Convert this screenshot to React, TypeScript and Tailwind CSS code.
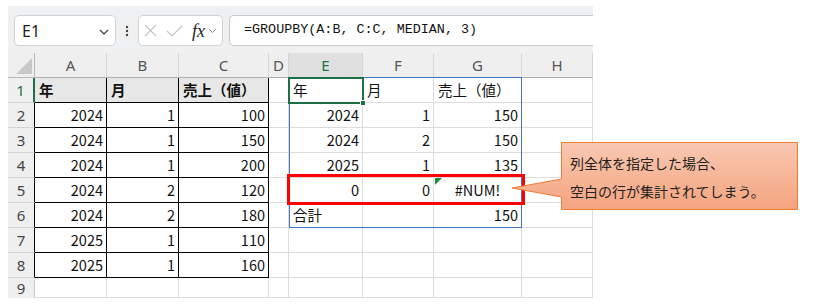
import React from "react";

type Align = "l" | "r" | "c";

interface CellData {
  text: string;
  align?: Align;
  bold?: boolean;
}

const COLS = ["A", "B", "C", "D", "E", "F", "G", "H"];

const n = (text: string): CellData => ({ text, align: "r" });
const t = (text: string, bold = false): CellData => ({ text, align: "l", bold });
const e: CellData = { text: "" };

// A..H for rows 1-9
const rows: CellData[][] = [
  [t("年", true), t("月", true), t("売上（値）", true), e, t("年"), t("月"), t("売上（値）"), e],
  [n("2024"), n("1"), n("100"), e, n("2024"), n("1"), n("150"), e],
  [n("2024"), n("1"), n("150"), e, n("2024"), n("2"), n("150"), e],
  [n("2024"), n("1"), n("200"), e, n("2025"), n("1"), n("135"), e],
  [n("2024"), n("2"), n("120"), e, n("0"), n("0"), { text: "#NUM!", align: "c" }, e],
  [n("2024"), n("2"), n("180"), e, t("合計"), e, n("150"), e],
  [n("2025"), n("1"), n("110"), e, e, e, e, e],
  [n("2025"), n("1"), n("160"), e, e, e, e, e],
  [e, e, e, e, e, e, e, e],
];

const alignClass: Record<Align, string> = {
  l: "justify-start pl-[4px]",
  r: "justify-end pr-[3px]",
  c: "justify-center",
};

const cellBorder = (r: number, c: number) => {
  if (r <= 8 && c <= 2) return "border-r border-b border-black";
  return "border-r border-b border-[#dcdcdc]";
};

const rowHeadClass = (r: number) => {
  if (r === 1) return "border-b border-b-[#d4d4d4] border-r-2 border-r-[#1e7145] text-[#1e7145]";
  if (r <= 8) return "border-b border-b-[#d4d4d4] border-r border-r-black text-[#444]";
  return "border-r border-r-[#c8c8c8] text-[#444]";
};

const FormulaBar = () => (
  <div className="h-[47px] bg-[#eff0f2] pt-[9px] flex items-start">
    {/* Name box */}
    <div className="ml-[6px] w-[102px] h-[31px] bg-white border border-[#d2d2d2] rounded-[5px] flex items-center justify-between pl-[7px] pr-[6px]">
      <span className="text-[16px] text-[#222] font-['Noto_Sans',sans-serif]">E1</span>
      <svg width="10" height="6" viewBox="0 0 10 6" className="mt-[3px]">
        <path d="M1 1l4 4 4-4" fill="none" stroke="#444" strokeWidth="1.3" />
      </svg>
    </div>
    {/* dots */}
    <div className="w-[22px] h-[31px] flex items-center justify-center">
      <svg width="4" height="12" viewBox="0 0 4 12">
        <circle cx="2" cy="2" r="1.2" fill="#444" />
        <circle cx="2" cy="6" r="1.2" fill="#444" />
        <circle cx="2" cy="10" r="1.2" fill="#444" />
      </svg>
    </div>
    {/* fx box */}
    <div className="w-[85px] h-[31px] bg-white border border-[#d2d2d2] rounded-[5px] flex items-center pl-[5px] gap-[9px]">
      <svg width="13" height="13" viewBox="0 0 13 13">
        <path d="M1 1l11 11M12 1L1 12" stroke="#c4c4c4" strokeWidth="1.1" fill="none" />
      </svg>
      <svg width="17" height="12" viewBox="0 0 17 12">
        <path d="M1 6l5 5L16 1" stroke="#c4c4c4" strokeWidth="1.1" fill="none" />
      </svg>
      <div className="flex items-center gap-[3px]">
        <span className="italic text-[18px] text-[#222] font-['Liberation_Serif',serif] leading-none">fx</span>
        <svg width="9" height="6" viewBox="0 0 9 6">
          <path d="M1 1l3.5 3.5L8 1" fill="none" stroke="#888" strokeWidth="1" />
        </svg>
      </div>
    </div>
    {/* formula input */}
    <div className="ml-[6px] flex-1 h-[31px] bg-white border-y border-l border-[#cacaca] rounded-l-[5px] flex items-center pl-[14px]">
      <span className="text-[13.4px] text-[#111] font-['Liberation_Mono',monospace]">=GROUPBY(A:B, C:C, MEDIAN, 3)</span>
    </div>
  </div>
);

const Sheet = () => (
  <div className="grid grid-cols-[27px_72px_72px_90px_20px_74px_71px_88px_71px] font-['Noto_Sans_CJK_JP',sans-serif] text-[14.5px] text-[#111]">
    {/* header row */}
    <div className="h-[25px] bg-[#efefef] border-r border-b border-[#b8b8b8] relative">
      <svg width="27" height="25" viewBox="0 0 27 25" className="absolute left-0 top-0">
        <polygon points="24,5 24,21 8,21" fill="#c9c9c9" />
      </svg>
    </div>
    {COLS.map((c) => (
      <div
        key={c}
        className={`h-[25px] flex items-center justify-center border-b border-b-[#b0b0b0] border-r border-r-[#d6d6d6] font-['Noto_Sans',sans-serif] text-[15px] ${
          c === "E" ? "bg-[#e0e0e0] text-[#1e7145]" : "bg-[#efefef] text-[#555]"
        }`}
      >
        {c}
      </div>
    ))}

    {rows.map((row, ri) => {
      const r = ri + 1;
      const h = r === 9 ? "h-[20px]" : "h-[25px]";
      return (
        <React.Fragment key={r}>
          <div className={`${h} bg-[#efefef] flex items-center justify-center font-['Noto_Sans',sans-serif] text-[15px] ${rowHeadClass(r)}`}>
            {r}
          </div>
          {row.map((cell, ci) => (
            <div
              key={ci}
              className={`${h} flex items-center whitespace-nowrap ${cellBorder(r, ci)} ${
                alignClass[cell.align ?? "l"]
              } ${cell.bold ? "font-bold" : ""} ${r === 1 && ci <= 2 ? "bg-[#e7e7e7]" : "bg-white"}`}
            >
              {cell.text}
            </div>
          ))}
        </React.Fragment>
      );
    })}
  </div>
);

const Callout = () => (
  <div className="absolute left-[510px] top-[140px] w-[290px] h-[72px]">
    <svg width="290" height="72" viewBox="0 0 290 72" className="absolute left-0 top-0">
      <defs>
        <linearGradient id="cg" x1="0" y1="0" x2="0" y2="1">
          <stop offset="0" stopColor="#f9c8b2" />
          <stop offset="1" stopColor="#f4a47f" />
        </linearGradient>
      </defs>
      <path
        d="M51.5 2.5 H287.5 V69.5 H51.5 V57 L2 48 L51.5 39 Z"
        fill="url(#cg)"
        stroke="#ed7d31"
        strokeWidth="1"
      />
    </svg>
    <div className="absolute left-[60px] top-[9px] text-[14px] leading-[28px] text-[#222] font-['Noto_Sans_CJK_JP',sans-serif] whitespace-nowrap">
      <div>列全体を指定した場合、</div>
      <div>空白の行が集計されてしまう。</div>
    </div>
  </div>
);

export default function App() {
  return (
    <div className="relative w-[813px] h-[307px] bg-white overflow-hidden">
      <div className="pt-[6px] pl-[8px] w-[593px]">
        <FormulaBar />
        <Sheet />
      </div>

      {/* spill range border */}
      <div className="absolute left-[289px] top-[77px] w-[233px] h-[151px] border border-[#4472c4]" />
      {/* active cell E1 */}
      <div className="absolute left-[288px] top-[77px] w-[76px] h-[27px] border-2 border-[#1e7145]" />
      <div className="absolute left-[360px] top-[100px] w-[6px] h-[6px] bg-[#1e7145] border border-white" />
      {/* error indicator in G5 */}
      <svg width="7" height="7" viewBox="0 0 7 7" className="absolute left-[435px] top-[178px]">
        <polygon points="0,0 7,0 0,7" fill="#1e8c3a" />
      </svg>
      {/* red highlight */}
      <div className="absolute left-[287px] top-[174px] w-[238px] h-[31px] border-[3px] border-[#ff0000]" />

      <Callout />
    </div>
  );
}
